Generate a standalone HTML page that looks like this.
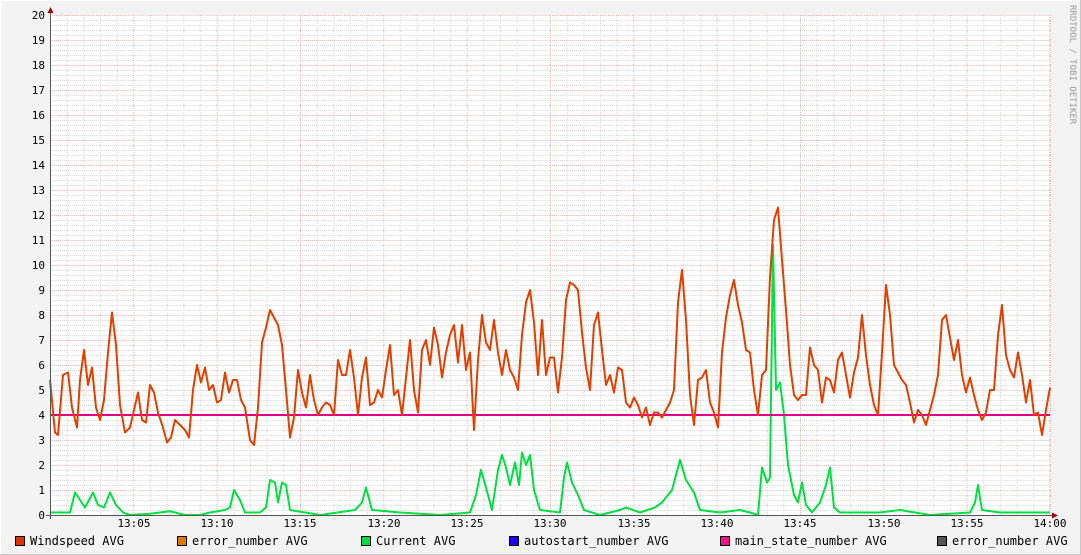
<!DOCTYPE html>
<html><head><meta charset="utf-8"><style>
html,body{margin:0;padding:0;background:#f3f3f3;}
svg{display:block;}
text{font-family:"DejaVu Sans Mono","Liberation Mono",monospace;font-size:11px;fill:#000;}
.lg{font-size:12px;}
</style></head><body>
<svg width="1081" height="555" viewBox="0 0 1081 555" xmlns="http://www.w3.org/2000/svg">
<defs>
<pattern id="g" patternUnits="userSpaceOnUse" x="50" y="15" width="83.3333" height="25">
<g stroke="#d8d8d8" stroke-width="1" stroke-dasharray="1 1" fill="none">
<line x1="0" y1="5.5" x2="83.34" y2="5.5"/><line x1="0" y1="10.5" x2="83.34" y2="10.5"/>
<line x1="0" y1="15.5" x2="83.34" y2="15.5"/><line x1="0" y1="20.5" x2="83.34" y2="20.5"/>
<line x1="17.17" y1="0" x2="17.17" y2="25"/><line x1="33.83" y1="0" x2="33.83" y2="25"/>
<line x1="50.5" y1="0" x2="50.5" y2="25"/><line x1="67.17" y1="0" x2="67.17" y2="25"/>
</g>
<g stroke="#f0b8b8" stroke-width="1" stroke-dasharray="1 1" fill="none">
<line x1="0" y1="0.5" x2="83.34" y2="0.5"/><line x1="0.5" y1="0" x2="0.5" y2="25"/>
</g>
</pattern>
</defs>
<rect x="0.5" y="0.5" width="1080" height="554" fill="#f3f3f3" stroke="#fff"/>
<line x1="0" y1="554.5" x2="1081" y2="554.5" stroke="#c8c8c8"/>
<line x1="1080.5" y1="0" x2="1080.5" y2="555" stroke="#c8c8c8"/>
<rect x="50" y="15" width="1001" height="501" fill="#fff"/>
<rect x="50" y="15" width="1001" height="501" fill="url(#g)"/>
<g text-anchor="end">
<text x="45" y="19">20</text><text x="45" y="44">19</text><text x="45" y="69">18</text><text x="45" y="94">17</text>
<text x="45" y="119">16</text><text x="45" y="144">15</text><text x="45" y="169">14</text><text x="45" y="194">13</text>
<text x="45" y="219">12</text><text x="45" y="244">11</text><text x="45" y="269">10</text><text x="45" y="294">9</text>
<text x="45" y="319">8</text><text x="45" y="344">7</text><text x="45" y="369">6</text><text x="45" y="394">5</text>
<text x="45" y="419">4</text><text x="45" y="444">3</text><text x="45" y="469">2</text><text x="45" y="494">1</text>
<text x="45" y="519">0</text>
</g>
<g text-anchor="middle">
<text x="134" y="527">13:05</text><text x="217" y="527">13:10</text><text x="300" y="527">13:15</text>
<text x="384" y="527">13:20</text><text x="467" y="527">13:25</text><text x="550" y="527">13:30</text>
<text x="634" y="527">13:35</text><text x="717" y="527">13:40</text><text x="800" y="527">13:45</text>
<text x="884" y="527">13:50</text><text x="967" y="527">13:55</text><text x="1050" y="527">14:00</text>
</g>
<g transform="translate(0,515) scale(1,-25)" fill="none">
<polyline vector-effect="non-scaling-stroke" stroke="#00e040" stroke-width="2" stroke-linejoin="round" points="50,.1 70,.1 75,.9 80,.6 85,.3 93,.9 98,.4 104,.3 110,.9 116,.4 123,.1 130,0 150,.05 170,.15 185,0 200,0 210,.1 225,.2 230,.3 234,1.0 240,.6 245,.1 260,.1 266,.3 270,1.4 275,1.3 278,.5 282,1.3 286,1.2 290,.2 320,0 355,.2 362,.5 366,1.1 372,.2 400,.1 440,0 470,.1 476,.8 481,1.8 486,1.1 492,.2 498,1.8 502,2.4 506,1.9 510,1.2 515,2.1 519,1.2 522,2.5 526,2.0 530,2.4 534,1.0 540,.2 560,.1 564,1.5 567,2.1 572,1.3 578,.8 584,.2 600,0 620,.2 626,.3 640,.1 655,.3 662,.5 672,1.0 680,2.2 686,1.4 694,.9 700,.2 720,.1 740,.2 750,.1 758,0 762,1.9 767,1.3 770,1.5 773,10.8 776,5.0 780,5.3 784,4.0 788,2.0 794,.8 798,.5 802,1.3 806,.4 812,.1 820,.5 826,1.2 830,1.9 834,.3 840,.1 880,.1 900,.2 930,0 970,.1 975,.5 978,1.2 982,.2 1000,.1 1050,.1"/>
<line vector-effect="non-scaling-stroke" x1="50" y1="4" x2="1050" y2="4" stroke="#e0008a" stroke-width="2"/>
<polyline vector-effect="non-scaling-stroke" stroke="#e04000" stroke-width="2" stroke-linejoin="round" points="50,5.4 55,3.3 58,3.2 63,5.6 68,5.7 72,4.3 77,3.5 80,5.4 84,6.6 88,5.2 92,5.9 96,4.3 100,3.8 104,4.6 108,6.5 112,8.1 116,6.8 120,4.4 125,3.3 130,3.5 134,4.2 138,4.9 142,3.8 146,3.7 150,5.2 154,4.9 158,4.1 163,3.5 167,2.9 171,3.1 175,3.8 180,3.6 185,3.4 189,3.1 193,5.0 197,6.0 201,5.3 205,5.9 209,5.0 213,5.2 217,4.5 221,4.6 225,5.7 229,4.9 233,5.4 237,5.4 241,4.6 245,4.3 250,3.0 254,2.8 258,4.3 262,6.9 266,7.5 270,8.2 274,7.9 278,7.6 282,6.8 286,5.0 290,3.1 294,3.9 298,5.8 302,4.9 306,4.3 310,5.6 314,4.6 318,4.0 322,4.3 326,4.5 330,4.4 334,4.0 338,6.2 342,5.6 346,5.6 350,6.6 354,5.5 358,4.0 362,5.5 366,6.3 370,4.4 374,4.5 378,5.0 382,4.7 386,5.8 390,6.8 394,4.8 398,5.0 402,4.0 406,5.5 410,7.0 414,5.0 418,4.1 422,6.6 426,7.0 430,6.0 434,7.5 438,6.8 442,5.5 446,6.5 450,7.2 454,7.6 458,6.1 462,7.6 466,5.8 470,6.5 474,3.4 478,6.2 482,8.0 486,6.9 490,6.6 494,7.8 498,6.5 502,5.6 506,6.6 510,5.8 514,5.5 518,5.0 522,7.2 526,8.5 530,9.0 534,7.7 538,5.6 542,7.8 546,5.6 550,6.3 554,6.3 558,4.9 562,6.3 566,8.6 570,9.3 574,9.2 578,9.0 582,7.3 586,5.9 590,5.0 594,7.6 598,8.1 602,6.6 606,5.2 610,5.6 614,4.9 618,5.9 622,5.8 626,4.5 630,4.3 634,4.7 638,4.4 642,3.9 646,4.3 650,3.6 654,4.1 658,4.1 662,3.9 666,4.2 670,4.5 674,5.0 678,8.5 682,9.8 686,7.8 690,4.8 694,3.6 698,5.4 702,5.5 706,5.8 710,4.5 714,4.1 718,3.5 722,6.5 726,7.9 730,8.8 734,9.4 738,8.4 742,7.7 746,6.6 750,6.5 754,5.0 758,4.0 762,5.6 766,5.8 770,9.5 774,11.8 778,12.3 782,10.2 786,8.2 790,6.0 794,4.8 798,4.6 802,4.8 806,4.8 810,6.7 814,6.0 818,5.8 822,4.5 826,5.5 830,5.4 834,4.9 838,6.2 842,6.5 846,5.6 850,4.7 854,5.7 858,6.3 862,8.0 866,6.4 870,5.2 874,4.4 878,4.0 882,6.5 886,9.2 890,8.0 894,6.0 898,5.7 902,5.4 906,5.2 910,4.5 914,3.7 918,4.2 922,4.0 926,3.6 930,4.2 934,4.8 938,5.6 942,7.8 946,8.0 950,7.1 954,6.2 958,7.0 962,5.6 966,4.9 970,5.5 974,4.8 978,4.2 982,3.8 986,4.1 990,5.0 994,5.0 998,7.2 1002,8.4 1006,6.4 1010,5.8 1014,5.5 1018,6.5 1022,5.6 1026,4.5 1030,5.4 1034,4.0 1038,4.1 1042,3.2 1046,4.2 1050,5.1"/>
</g>
<line x1="50.5" y1="12" x2="50.5" y2="519" stroke="#555" stroke-width="1"/>
<line x1="46" y1="515.5" x2="1054" y2="515.5" stroke="#555" stroke-width="1"/>
<polygon points="47.5,13 53.5,13 50.5,7" fill="#990000"/>
<polygon points="1052,512.5 1052,518.5 1058,515.5" fill="#990000"/>
<g stroke="#000" stroke-width="1">
<rect x="15.5" y="536.5" width="9" height="9" fill="#dd3300"/>
<rect x="177.5" y="536.5" width="9" height="9" fill="#dd7700"/>
<rect x="361.5" y="536.5" width="9" height="9" fill="#00dd44"/>
<rect x="509.5" y="536.5" width="9" height="9" fill="#2200ee"/>
<rect x="720.5" y="536.5" width="9" height="9" fill="#ee1188"/>
<rect x="937.5" y="536.5" width="9" height="9" fill="#555555"/>
</g>
<text class="lg" x="30" y="545">Windspeed AVG</text>
<text class="lg" x="192" y="545">error_number AVG</text>
<text class="lg" x="376" y="545">Current AVG</text>
<text class="lg" x="524" y="545">autostart_number AVG</text>
<text class="lg" x="735" y="545">main_state_number AVG</text>
<text class="lg" x="952" y="545">error_number AVG</text>
<text transform="translate(1070,5) rotate(90)" style="font-size:9px;fill:#999">RRDTOOL / TOBI OETIKER</text>
</svg>
</body></html>
